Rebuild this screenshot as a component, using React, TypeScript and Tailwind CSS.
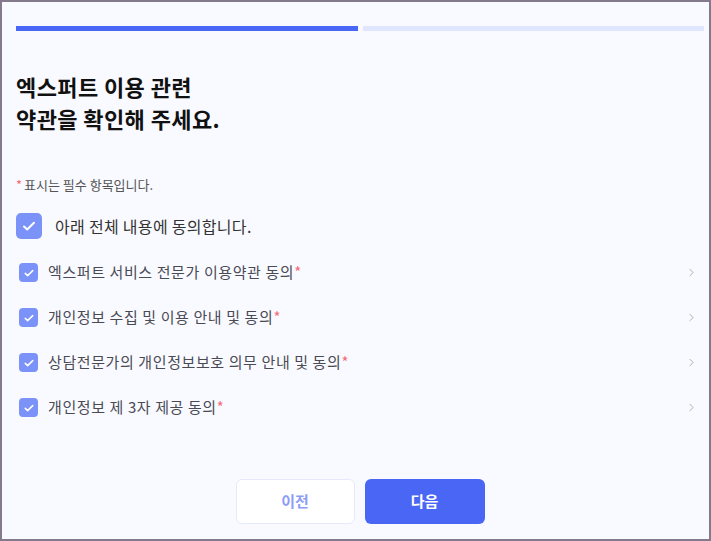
import { ChevronRight } from "lucide-react";

const terms = [
    "엑스퍼트 서비스 전문가 이용약관 동의",
    "개인정보 수집 및 이용 안내 및 동의",
    "상담전문가의 개인정보보호 의무 안내 및 동의",
    "개인정보 제 3자 제공 동의",
];

function Check({ size }: { size: "lg" | "sm" }) {
    const box = size === "lg" ? "w-[26px] h-[26px] rounded-[5px]" : "w-[19px] h-[19px] rounded-[4px]";
    const icon = size === "lg" ? 16 : 12;
    return (
        <div className={`${box} bg-[#7b93f9] flex items-center justify-center shrink-0`}>
            <svg width={icon} height={icon} viewBox="0 0 16 16" fill="none">
                <path d="M3 8.5l3.2 3L13 4.8" stroke="white" strokeWidth="2" strokeLinecap="round" strokeLinejoin="round" />
            </svg>
        </div>
    );
}

export default function App() {
    return (
        <div
            className="w-[711px] h-[541px] border-2 border-[#857a8c] bg-[#f9faff] flex flex-col pl-[14px] pr-[5px] pt-[24px]"
            style={{ fontFamily: '"Noto Sans CJK KR", "Noto Sans", sans-serif' }}
        >
            {/* Progress */}
            <div className="flex gap-[5px] h-[5px]">
                <div className="flex-1 bg-[#4a66f5]" />
                <div className="flex-1 bg-[#dfe6fd]" />
            </div>

            {/* Title */}
            <h1 className="mt-[39px] text-[22px] leading-[32px] font-bold text-[#111] tracking-[0.4px]">
                엑스퍼트 이용 관련<br />
                약관을 확인해 주세요.
            </h1>

            <p className="mt-[43px] text-[13px] leading-[16px] text-[#555] flex">
                <span className="text-[#f56b7a] mr-[2px]">*</span>표시는 필수 항목입니다.
            </p>

            {/* All agree */}
            <div className="mt-[20px] flex items-center h-[26px]">
                <Check size="lg" />
                <span className="ml-[13px] text-[16px] text-[#333] tracking-[0.3px]">아래 전체 내용에 동의합니다.</span>
            </div>

            {/* Items */}
            <div className="mt-[24px] flex flex-col gap-[26px]">
                {terms.map((t) => (
                    <div key={t} className="flex items-center h-[19px] pl-[3px] pr-[6px]">
                        <Check size="sm" />
                        <span className="ml-[10px] text-[15px] text-[#4a4a55] flex-1 tracking-[0.6px]">
                            {t}
                            <span className="text-[#f56b7a]">*</span>
                        </span>
                        <ChevronRight size={13} strokeWidth={1.5} className="text-[#9e9e9e]" />
                    </div>
                ))}
            </div>

            {/* Buttons */}
            <div className="mt-auto mb-[15px] flex justify-center gap-[10px]">
                <button className="w-[119px] h-[45px] rounded-[6px] bg-white border border-[#e6e9fb] text-[15px] font-bold text-[#8c9cf7]">
                    이전
                </button>
                <button className="w-[120px] h-[45px] rounded-[6px] bg-[#4a66f5] text-[15px] font-bold text-white">
                    다음
                </button>
            </div>
        </div>
    );
}
